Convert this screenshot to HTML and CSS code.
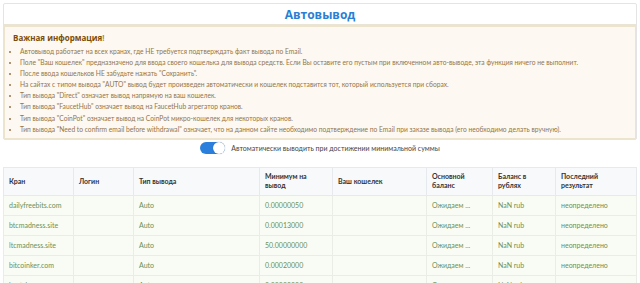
FILE: index.html
```html
<!DOCTYPE html>
<html lang="ru">
<head>
    <meta charset="UTF-8">
    <title>Автовывод</title>
    <link rel="stylesheet" href="styles.css">
</head>
<body>
    <div class="card">
        <div class="card-header">Автовывод</div>
        <div class="info">
            <div class="info-title">Важная информация<span class="excl">!</span></div>
            <ul class="info-list">
                <li>Автовывод работает на всех кранах, где НЕ требуется подтверждать факт вывода по Email.</li>
                <li>Поле "Ваш кошелек" предназначено для ввода своего кошелька для вывода средств. Если Вы оставите его пустым при включенном авто-выводе, эта функция ничего не выполнит.</li>
                <li>После ввода кошельков НЕ забудьте нажать "Сохранить".</li>
                <li>На сайтах с типом вывода "AUTO" вывод будет произведен автоматически и кошелек подставится тот, который используется при сборах.</li>
                <li>Тип вывода "Direct" означает вывод напрямую на ваш кошелек.</li>
                <li>Тип вывода "FaucetHub" означает вывод на FaucetHub агрегатор кранов.</li>
                <li>Тип вывода "CoinPot" означает вывод на CoinPot микро-кошелек для некоторых кранов.</li>
                <li>Тип вывода "Need to confirm email before withdrawal" означает, что на данном сайте необходимо подтверждение по Email при заказе вывода (его необходимо делать вручную).</li>
            </ul>
        </div>
    </div>

    <div class="auto-row">
        <span class="switch"><span class="knob"></span></span>
        <span class="auto-label">Автоматически выводить при достижении минимальной суммы</span>
    </div>

    <table class="faucets">
        <thead>
            <tr>
                <th class="c-name">Кран</th>
                <th class="c-login">Логин</th>
                <th class="c-type">Тип вывода</th>
                <th class="c-min">Минимум на вывод</th>
                <th class="c-wallet">Ваш кошелек</th>
                <th class="c-bal">Основной баланс</th>
                <th class="c-rub">Баланс в рублях</th>
                <th class="c-res">Последний результат</th>
            </tr>
        </thead>
        <tbody id="faucet-body">
        </tbody>
    </table>

    <script>
        const faucets = [
            { name: 'dailyfreebits.com', min: '0.00000050' },
            { name: 'btcmadness.site', min: '0.00013000' },
            { name: 'ltcmadness.site', min: '50.00000000' },
            { name: 'bitcoinker.com', min: '0.00020000' },
            { name: 'bestchange.com', min: '0.00003000' }
        ];

        const body = document.getElementById('faucet-body');

        faucets.forEach(f => {
            const row = document.createElement('tr');
            row.innerHTML = `
                <td>${f.name}</td>
                <td></td>
                <td>Auto</td>
                <td>${f.min}</td>
                <td></td>
                <td>Ожидаем ...</td>
                <td>NaN rub</td>
                <td>неопределено</td>
            `;
            body.appendChild(row);
        });
    </script>
</body>
</html>
```

FILE: styles.css
```css
body {
    margin: 0;
    padding: 3px;
    font-family: Lato, "Open Sans", sans-serif;
    background: #fff;
    color: #333;
}

.card {
    border: 1px solid #e4e4e4;
    border-radius: 2px;
    background: #fff;
}

.card-header {
    height: 20px;
    line-height: 22px;
    text-align: center;
    font-family: "Open Sans", sans-serif;
    font-size: 12px;
    font-weight: bold;
    color: #2a7fd5;
    border-bottom: 2px solid #e9e4d3;
}

.info {
    background: #fdf9f2;
    border: 1px solid #ece4cd;
    padding: 5px 8px 3px;
}

.info-title {
    font-family: "Open Sans", sans-serif;
    font-size: 8px;
    font-weight: bold;
    color: #7b4b08;
    line-height: 12px;
    margin-bottom: 2px;
}

.info-title .excl {
    color: #c9822a;
}

.info-list {
    margin: 0;
    padding-left: 7px;
    font-size: 6.7px;
    line-height: 11.1px;
    color: #937548;
}

.auto-row {
    display: flex;
    justify-content: center;
    align-items: center;
    gap: 6px;
    height: 16px;
    margin: 0 0 11px;
}

.switch {
    position: relative;
    width: 25px;
    height: 12px;
    border-radius: 6px;
    background: #2b7fdc;
}

.switch .knob {
    position: absolute;
    right: 0;
    top: 0;
    width: 12px;
    height: 12px;
    border-radius: 50%;
    background: #fff;
    box-shadow: 0 0 1px rgba(0, 0, 0, 0.4);
}

.auto-label {
    font-size: 7px;
    color: #444;
}

.faucets {
    width: 100%;
    border-collapse: collapse;
    font-size: 7px;
    table-layout: fixed;
    border: 1px solid #e6e9ee;
}

.faucets th {
    background: #f8f9fb;
    text-align: left;
    font-weight: bold;
    color: #333;
    line-height: 9.3px;
    padding: 4px 5px;
    height: 19px;
    border: 1px solid #e6e9ee;
}

.faucets td {
    background: #f9fcf4;
    color: #6a9157;
    line-height: 9px;
    padding: 5px 5px;
    border: 1px solid #e9ede5;
    white-space: nowrap;
    overflow: hidden;
}

.c-name { width: 59px; }
.c-login { width: 49px; }
.c-type { width: 115px; }
.c-min { width: 62px; }
.c-wallet { width: 83px; }
.c-bal { width: 55px; }
.c-rub { width: 52px; }
```
